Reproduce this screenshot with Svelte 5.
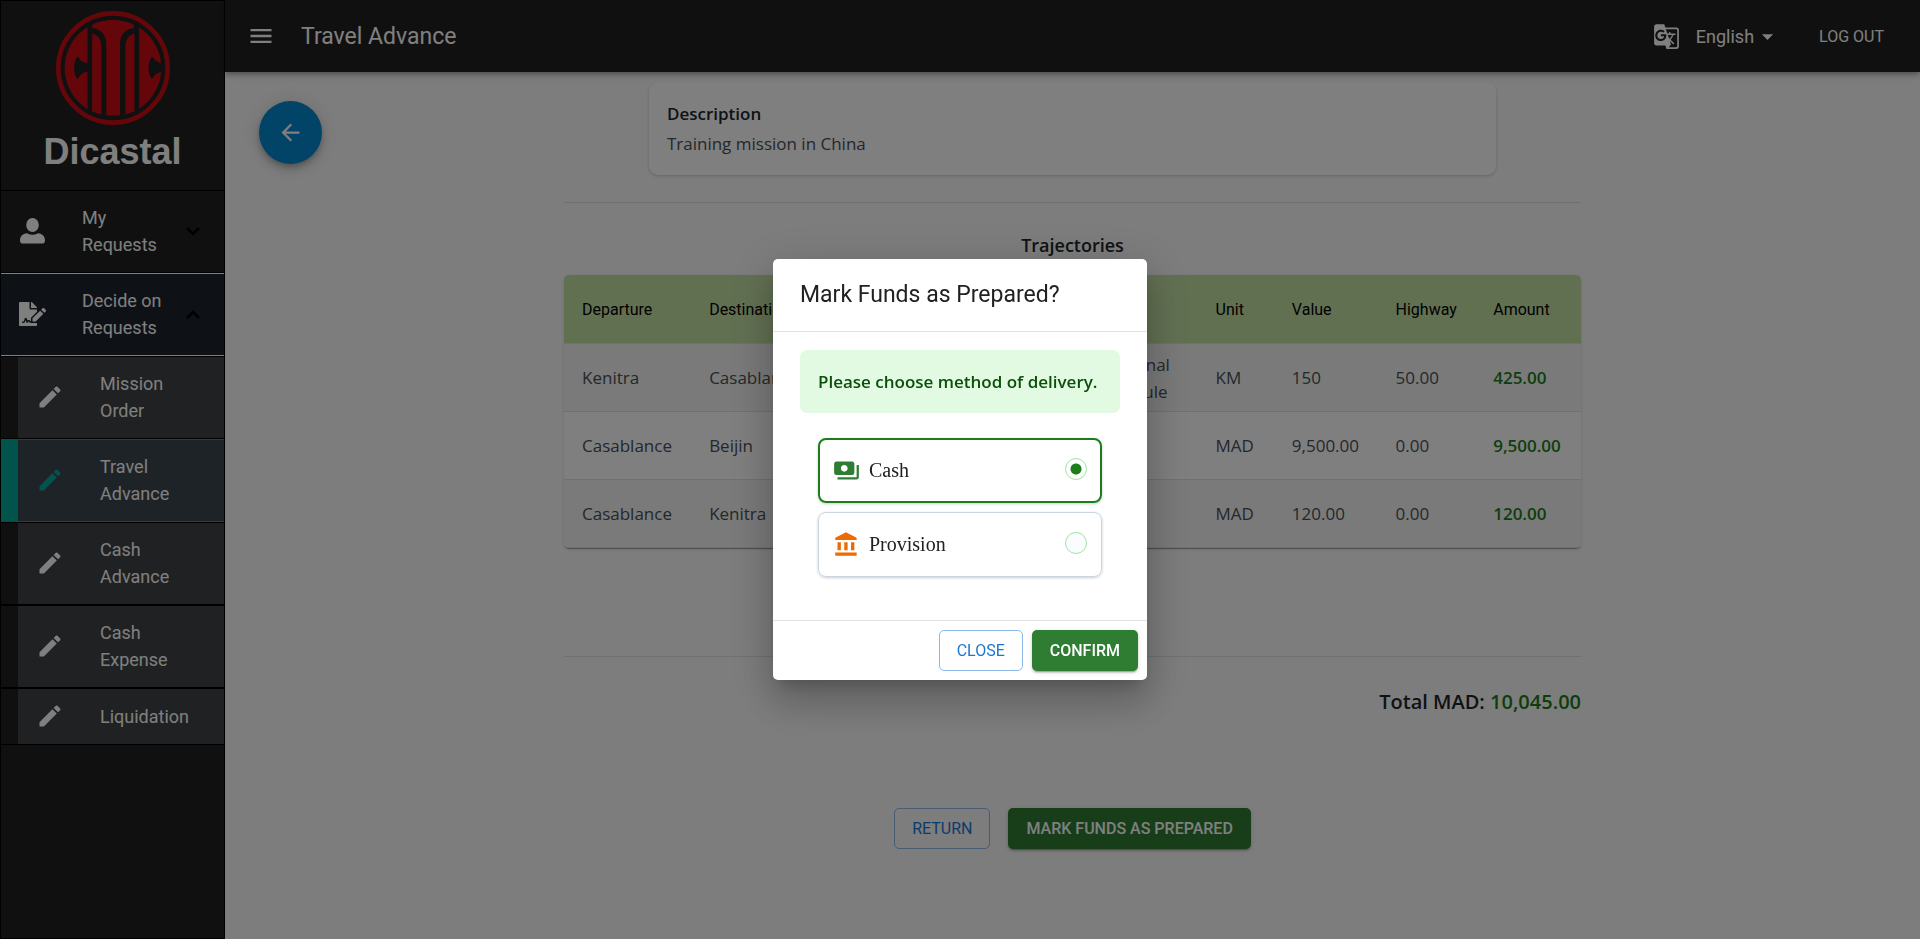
<script>
  let method = $state('cash');
  let language = $state('English');

  const steps = [
    { label: 'Mission Order' },
    { label: 'Travel Advance', active: true },
    { label: 'Cash Advance' },
    { label: 'Cash Expense' },
    { label: 'Liquidation' }
  ];

  const trips = [
    { from: 'Kenitra', to: 'Casablance', transport: 'Personal Vehicule', unit: 'KM', value: '150', highway: '50.00', amount: '425.00' },
    { from: 'Casablance', to: 'Beijin', transport: '', unit: 'MAD', value: '9,500.00', highway: '0.00', amount: '9,500.00' },
    { from: 'Casablance', to: 'Kenitra', transport: '', unit: 'MAD', value: '120.00', highway: '0.00', amount: '120.00' }
  ];
</script>

<div class="page">
  <aside>
    <div class="brand">
      <svg class="logo" viewBox="168 36 340 340" aria-hidden="true">
        <defs>
          <clipPath id="disc"><circle cx="338" cy="206" r="144" /></clipPath>
        </defs>
        <circle cx="338" cy="206" r="163" fill="none" stroke="currentColor" stroke-width="14" />
        <g clip-path="url(#disc)">
          <path d="M190 60H262V192C248 190 238 182 235 173Q231 171 228 178C220 192 220 220 228 234Q232 240 236 235C239 226 248 219 262 217V350H190Z" />
          <path d="M416 60H490V194C472 190 461 183 457 174Q453 171 450 178C442 192 442 220 450 234Q454 240 458 235C461 226 472 219 490 215V350H416Z" />
          <path d="M276 102C293 108 303 122 303 140V346L276 336Z" />
          <path d="M402 102C385 108 375 122 375 140V346L402 336Z" />
          <path d="M318 348V134C318 106 300 90 276 87V76C300 58 376 58 400 76V87C376 90 359 106 359 134V348Z" />
        </g>
      </svg>
      <strong>Dicastal</strong>
    </div>
    <nav>
      <button class="item group" aria-expanded="false">
        <svg class="person" viewBox="0 0 26 26" aria-hidden="true"><ellipse cx="13" cy="7" rx="6.3" ry="7" /><path d="M7.5 15.2Q13 18.4 18.5 15.2C23 15.7 25.5 18.5 25.5 22.5Q25.5 25.6 22.5 25.6H3.500Q.5 25.600 .5 22.500C.5 18.500 3 15.700 7.500 15.200Z" /></svg>
        <span>My Requests</span>
        <svg class="chevron" viewBox="0 0 14 9" aria-hidden="true"><path d="M1 1L7 7L13 1" /></svg>
      </button>
      <button class="item group open" aria-expanded="true">
        <svg class="sign" viewBox="0 0 576 512" aria-hidden="true"><path d="M218.17 424.14c-2.950-5.920-8.090-6.520-10.170-6.520s-7.220.59-10.020 6.190l-7.670 15.340c-6.370 12.780-25.030 11.370-29.480-2.090L144 386.590l-10.610 31.880c-5.890 17.660-22.380 29.530-41 29.530H80c-8.840 0-16-7.160-16-16s7.160-16 16-16h12.390c4.830 0 9.110-3.080 10.640-7.660l18.190-54.640c3.300-9.810 12.440-16.410 22.780-16.410s19.480 6.590 22.770 16.410l13.880 41.640c19.750-16.190 54.060-9.700 66 14.160 1.890 3.780 5.490 5.950 9.360 6.260v-82.120l128-127.090V160H248c-13.200 0-24-10.800-24-24V0H24C10.700 0 0 10.700 0 24v464c0 13.300 10.700 24 24 24h336c13.300 0 24-10.700 24-24v-40l-128-.11c-16.120-.31-30.580-9.280-37.830-23.750zM384 121.900c0-6.300-2.500-12.400-7-16.900L279.100 7c-4.500-4.500-10.600-7-17-7H256v128h128v-6.100zm-96 225.060V416h68.990l161.680-162.780-67.880-67.880L288 346.960zm280.540-179.630l-31.870-31.870c-9.940-9.940-26.070-9.940-36.010 0l-27.250 27.250 67.880 67.880 27.250-27.250c9.950-9.940 9.950-26.070 0-36.010z" /></svg>
        <span>Decide on Requests</span>
        <svg class="chevron" viewBox="0 0 14 9" aria-hidden="true"><path d="M1 8L7 2L13 8" /></svg>
      </button>
      {#each steps as step}
        <a class="item sub" class:active={step.active} href="#top">
          <svg viewBox="0 0 24 24" aria-hidden="true"><path d="M3 17.25V21h3.75L17.81 9.94l-3.750-3.750L3 17.250zM20.710 7.040c.39-.39.39-1.020 0-1.410l-2.340-2.340a1 1 0 0 0-1.410 0l-1.830 1.830 3.750 3.750 1.830-1.830z" /></svg>
          <span>{step.label}</span>
        </a>
      {/each}
    </nav>
  </aside>

  <div class="body">
    <header>
      <button class="plain" aria-label="Menu">
        <svg width="28" height="28" viewBox="0 0 24 24"><path d="M3 18h18v-2H3v2zm0-5h18v-2H3v2zm0-7v2h18V6H3z" /></svg>
      </button>
      <h1>Travel Advance</h1>
      <svg class="translate" width="27" height="27" viewBox="0 0 24 24" aria-hidden="true"><path d="M21 4H11l-1-3H3c-1.100 0-2 .9-2 2v15c0 1.100.9 2 2 2h8l1 3h9c1.100 0 2-.9 2-2V6c0-1.100-.9-2-2-2zM7 16c-2.760 0-5-2.240-5-5s2.240-5 5-5c1.350 0 2.480.5 3.350 1.300L9.030 8.570c-.38-.36-1.040-.78-2.030-.78-1.740 0-3.150 1.440-3.150 3.210S5.260 14.210 7 14.210c2.010 0 2.840-1.440 2.920-2.410H7v-1.710h4.680c.07.31.12.61.12 1.020C11.800 13.970 9.890 16 7 16zm6.170-5.420h3.700c-.43 1.250-1.110 2.430-2.050 3.470-.31-.35-.6-.72-.86-1.100l-.79-2.370zm8.330 9.920c0 .55-.45 1-1 1H14l2-2.500-1.040-3.100 3.100 3.100.92-.92-3.300-3.250.02-.02c1.130-1.250 1.930-2.690 2.400-4.220H20v-1.300h-4.530V8h-1.290v1.290h-1.440L11.460 5.500h9.040c.55 0 1 .45 1 1v14z" /></svg>
      <button class="plain language">{language}<svg width="27" height="27" viewBox="0 0 24 24" aria-hidden="true"><path d="M7 10l5 5 5-5z" /></svg></button>
      <button class="plain logout">LOG OUT</button>
    </header>

    <main>
      <button class="back" aria-label="Back">
        <svg width="27" height="27" viewBox="0 0 24 24"><path d="M20 11H7.830l5.590-5.590L12 4l-8 8 8 8 1.410-1.410L7.830 13H20v-2z" /></svg>
      </button>
      <div class="content">
        <section class="card">
          <h2>Description</h2>
          <p>Training mission in China</p>
        </section>
        <hr />
        <h3>Trajectories</h3>
        <table>
          <colgroup>
            <col class="c-from" /><col class="c-to" /><col class="c-transport" /><col class="c-unit" /><col class="c-value" /><col class="c-highway" /><col class="c-amount" />
          </colgroup>
          <thead>
            <tr><th>Departure</th><th>Destination</th><th></th><th>Unit</th><th>Value</th><th>Highway</th><th>Amount</th></tr>
          </thead>
          <tbody>
            {#each trips as t}
              <tr><td>{t.from}</td><td>{t.to}</td><td>{t.transport}</td><td>{t.unit}</td><td>{t.value}</td><td>{t.highway}</td><td class="amount">{t.amount}</td></tr>
            {/each}
          </tbody>
        </table>
        <hr class="low" />
        <p class="total">Total MAD: <span>10,045.00</span></p>
        <div class="actions">
          <button class="btn outlined">RETURN</button>
          <button class="btn filled">MARK FUNDS AS PREPARED</button>
        </div>
      </div>
    </main>
  </div>
</div>

<div class="backdrop">
  <div class="dialog" role="dialog" aria-modal="true" aria-labelledby="dialog-title">
    <h2 id="dialog-title">Mark Funds as Prepared?</h2>
    <div class="dialog-body">
      <p class="notice">Please choose method of delivery.</p>
      <div class="options">
        <label class:selected={method === 'cash'}>
          <svg class="cash" width="27" height="27" viewBox="0 0 24 24" aria-hidden="true"><path d="M19 14V6c0-1.100-.9-2-2-2H3c-1.100 0-2 .9-2 2v8c0 1.100.9 2 2 2h14c1.100 0 2-.9 2-2zm-9-1c-1.660 0-3-1.340-3-3s1.340-3 3-3 3 1.340 3 3-1.340 3-3 3zm13-6v11c0 1.100-.9 2-2 2H4v-2h17V7h2z" /></svg>
          <span>Cash</span>
          <input type="radio" name="method" value="cash" bind:group={method} />
        </label>
        <label class:selected={method === 'provision'}>
          <svg class="bank" width="27" height="27" viewBox="0 0 24 24" aria-hidden="true"><path d="M4 10v7h3v-7H4zm6 0v7h3v-7h-3zM2 22h19v-3H2v3zm14-12v7h3v-7h-3zm-4.500-9L2 6v2h19V6l-9.500-5z" /></svg>
          <span>Provision</span>
          <input type="radio" name="method" value="provision" bind:group={method} />
        </label>
      </div>
    </div>
    <footer>
      <button class="btn outlined">CLOSE</button>
      <button class="btn filled">CONFIRM</button>
    </footer>
  </div>
</div>

<style>
  :global(body) {
    margin: 0;
    background: #fafafa;
  }
  .page, .backdrop {
    font: 18px/27px Roboto, sans-serif;
    box-sizing: border-box;
  }
  .page *, .backdrop * {
    box-sizing: border-box;
  }
  .page {
    display: flex;
    height: 100vh;
    overflow: hidden;
  }
  h1, h2, h3, p {
    margin: 0;
  }
  svg {
    flex: none;
    fill: currentColor;
  }
  button {
    font: inherit;
    cursor: pointer;
  }

  aside {
    flex: none;
    width: 225px;
    background: #212121;
    border: 1px solid #000;
    color: #fff;
  }
  .brand {
    height: 189px;
    padding-top: 10px;
    display: flex;
    flex-direction: column;
    align-items: center;
  }
  .logo {
    width: 114px;
    height: 114px;
    color: #ca0e14;
  }
  .brand strong {
    font: bold 36px/54px "Liberation Sans", Arial, sans-serif;
  }
  .item {
    width: 100%;
    display: flex;
    align-items: center;
    padding: 13px 24px 14px 18px;
    border: 1px solid #000;
    border-width: 1px 0;
    color: #fff;
    text-align: left;
    text-decoration: none;
  }
  .item span {
    flex: 1;
  }
  .group {
    background: #212121;
  }
  .group span {
    margin-right: 18px;
  }
  .group svg:first-child {
    width: 27px;
    height: 26px;
    margin-right: 36px;
  }
  .group .sign {
    height: 24px;
  }
  .group.open {
    background: #1c242e;
    border-color: #fff;
  }
  .chevron {
    width: 14px;
    height: 9px;
  }
  .chevron path {
    fill: none;
    stroke: #000;
    stroke-width: 2.5;
  }
  .sub {
    padding-left: 35px;
    background: linear-gradient(90deg, #212121 17px, #3f4244 17px);
  }
  .sub svg {
    width: 28px;
    height: 28px;
    margin-right: 36px;
  }
  .sub.active {
    background: linear-gradient(90deg, #00a896 17px, #3c464e 17px);
    border-color: #00a896;
  }
  .sub.active svg {
    color: #00a896;
  }

  .body {
    flex: 1;
    min-width: 0;
    display: flex;
    flex-direction: column;
  }
  header {
    position: relative;
    z-index: 1;
    flex: none;
    height: 72px;
    padding: 0 36px 0 22px;
    display: flex;
    align-items: center;
    background: #212121;
    color: #fff;
    box-shadow: 0 2px 4px -1px rgba(0, 0, 0, .2), 0 4px 5px rgba(0, 0, 0, .14), 0 1px 10px rgba(0, 0, 0, .12);
  }
  .plain {
    display: flex;
    align-items: center;
    padding: 0;
    border: 0;
    background: none;
    color: inherit;
  }
  h1 {
    flex: 1;
    margin-left: 26px;
    font-size: 23px;
    font-weight: 400;
  }
  .translate {
    margin-right: 16px;
  }
  .language {
    margin-right: 38px;
  }
  .logout {
    font-size: 16px;
  }

  main {
    position: relative;
    flex: 1;
    padding-top: 10px;
    color: #212529;
    font-family: "Open Sans", "Segoe UI", sans-serif;
  }
  .back {
    position: absolute;
    top: 29px;
    left: 34px;
    width: 63px;
    height: 63px;
    padding: 0;
    display: grid;
    place-items: center;
    border: 0;
    border-radius: 50%;
    background: #0288d1;
    color: #fff;
    box-shadow: 0 3px 5px -1px rgba(0, 0, 0, .2), 0 6px 10px rgba(0, 0, 0, .14), 0 1px 18px rgba(0, 0, 0, .12);
  }
  .content {
    width: 60%;
    margin: 0 auto;
    display: flex;
    flex-direction: column;
    align-items: center;
    font-size: 17px;
  }
  .card {
    width: 83.300%;
    padding: 18px;
    background: #fff;
    border-radius: 9px;
    box-shadow: 0 1px 3px rgba(0, 0, 0, .2);
  }
  .card h2 {
    margin-bottom: 3px;
    font-size: 17px;
    font-weight: 600;
    line-height: 27px;
  }
  .card p, td {
    color: #495057;
  }
  hr {
    width: 100%;
    height: 1px;
    margin: 27px 0;
    border: 0;
    background: #e0e0e0;
  }
  h3 {
    margin-bottom: 14px;
    font-size: 18px;
    font-weight: 600;
    line-height: 31px;
  }
  table {
    width: 100%;
    table-layout: fixed;
    border-collapse: separate;
    border-spacing: 0;
    border-radius: 5px;
    overflow: hidden;
    background: #fff;
    box-shadow: 0 2px 1px -1px rgba(0, 0, 0, .2), 0 1px 1px rgba(0, 0, 0, .14), 0 1px 3px rgba(0, 0, 0, .12);
  }
  .c-from { width: 12.5%; }
  .c-to { width: 38.5%; }
  .c-transport { width: 11.3%; }
  .c-unit { width: 7.5%; }
  .c-value { width: 10.2%; }
  .c-highway { width: 9.6%; }
  .c-amount { width: 10.4%; }
  th, td {
    height: 68px;
    padding: 0 0 0 18px;
    border-bottom: 1px solid #e0e0e0;
    text-align: left;
  }
  th {
    height: 69px;
    background: #c5e1a5;
    color: #000;
    font-family: Roboto, sans-serif;
    font-size: 16px;
    font-weight: 400;
  }
  tbody tr:nth-child(odd) {
    background: #f5f5f5;
  }
  td.amount {
    color: #1b7e1b;
    font-weight: 600;
  }
  hr.low {
    margin: 108px 0 27px;
  }
  .total {
    width: 100%;
    text-align: right;
    font-size: 20px;
    font-weight: 600;
    line-height: 36px;
  }
  .total span {
    color: #1b7e1b;
  }
  .actions {
    display: flex;
    gap: 18px;
    margin-top: 88px;
  }
  .btn {
    height: 41px;
    padding: 0 18px;
    border-radius: 5px;
    font: 500 16px/27px Roboto, sans-serif;
  }
  .outlined {
    padding: 0 17px;
    border: 1px solid #8cbae8;
    background: none;
    color: #1976d2;
    font-weight: 400;
  }
  .filled {
    border: 0;
    background: #2e7d32;
    color: #fff;
    box-shadow: 0 3px 1px -2px rgba(0, 0, 0, .2), 0 2px 2px rgba(0, 0, 0, .14), 0 1px 5px rgba(0, 0, 0, .12);
  }

  .backdrop {
    position: fixed;
    inset: 0;
    z-index: 10;
    display: flex;
    align-items: center;
    justify-content: center;
    background: rgba(0, 0, 0, .5);
  }
  .dialog {
    min-width: 374px;
    background: #fff;
    border-radius: 5px;
    color: #212121;
    box-shadow: 0 11px 15px -7px rgba(0, 0, 0, .2), 0 24px 38px 3px rgba(0, 0, 0, .14), 0 9px 46px 8px rgba(0, 0, 0, .12);
  }
  .dialog h2 {
    padding: 18px 27px;
    font-size: 23px;
    font-weight: 400;
    line-height: 36px;
  }
  .dialog-body {
    padding: 18px 27px 43px;
    border: 1px solid #e0e0e0;
    border-width: 1px 0;
  }
  .notice {
    margin-bottom: 25px;
    padding: 18px;
    border-radius: 7px;
    background: #e2fae2;
    color: #0b4f0b;
    font: 600 17px/27px "Open Sans", "Segoe UI", sans-serif;
  }
  .options {
    display: flex;
    flex-direction: column;
    gap: 9px;
    margin: 0 18px;
  }
  label {
    height: 65px;
    padding: 0 14px;
    display: flex;
    align-items: center;
    border: 1px solid #cbd5e1;
    border-radius: 8px;
    box-shadow: 0 1px 3px rgba(0, 0, 0, .2);
    font: 20px/27px "Liberation Serif", serif;
  }
  label.selected {
    padding: 0 13px;
    border: 2px solid #1b7e1b;
  }
  label span {
    flex: 1;
    margin-left: 9px;
  }
  .cash {
    color: #2e7d32;
  }
  .bank {
    color: #ed6c02;
  }
  input {
    appearance: none;
    width: 22px;
    height: 22px;
    margin: 0 0 4px;
    border: 1px solid #9fe49f;
    border-radius: 50%;
    background: #fafcff;
  }
  input:checked {
    background: radial-gradient(circle, #1b7e1b 5px, #fff 6px);
  }
  footer {
    display: flex;
    justify-content: flex-end;
    gap: 9px;
    padding: 9px;
  }
</style>
